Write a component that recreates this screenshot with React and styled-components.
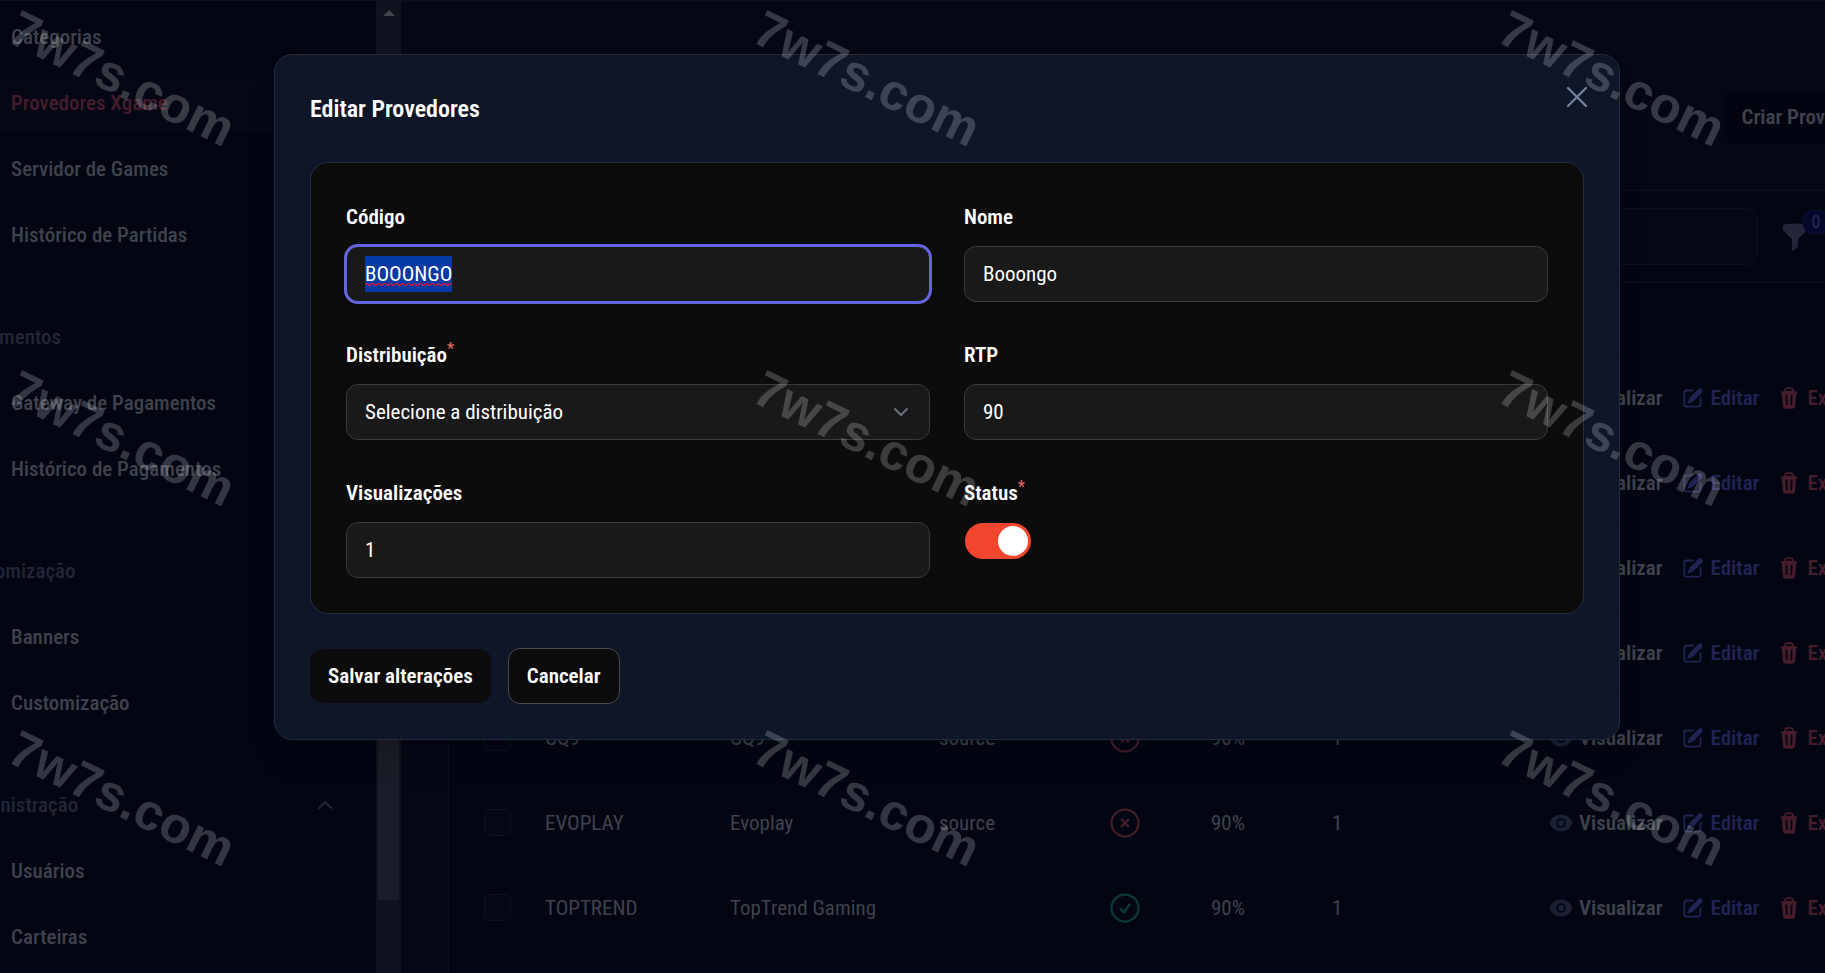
import { useEffect, useRef } from "react"
import styled, { createGlobalStyle } from "styled-components"
import { HiOutlineXMark, HiOutlineXCircle, HiOutlineCheckCircle } from "react-icons/hi2"
import { HiMiniEye, HiMiniPencilSquare, HiMiniTrash, HiMiniFunnel } from "react-icons/hi2"
import { ChevronUp, ChevronDown } from "lucide-react"

const theme = {
    page: "#040814",
    sidebar: "#020612",
    line: "#0c101b",
    muted: "#3f424c",
    faded: "#222636",
    indigo: "#212452",
    red: "#451d2b",
    green: "#0b3b3a",
    modal: "#0e1628",
    section: "#0c0c0c",
    field: "#191919",
    ring: "#3a3a3b",
    selection: "#0539a3",
}

const GlobalStyle = createGlobalStyle`
    * {
        box-sizing: border-box;
    }

    body {
        margin: 0;
        background-color: ${theme.page};
    }

    body, button, input, select {
        font-family: "Roboto Condensed", "Liberation Sans Narrow", Roboto, sans-serif;
        font-size: 21px;
        line-height: 36px;
    }
`

const Page = styled.div`
    position: relative;
    display: flex;
    height: 100vh;
    overflow: hidden;
    border-top: 1px solid ${theme.line};
`

const Sidebar = styled.aside`
    display: flex;
    flex: none;
    width: 401px;
    overflow: hidden;
    background-color: ${theme.sidebar};
`

const Nav = styled.nav`
    flex: 1;
    display: flex;
    flex-direction: column;
    gap: 42px;
    margin-left: -61px;
    padding-top: 6px;
`

const NavGroup = styled.div`
    display: flex;
    flex-direction: column;
    gap: 6px;
`

const GroupHeader = styled.div`
    display: flex;
    align-items: center;
    justify-content: space-between;
    height: 60px;
    padding: 0 39px 0 18px;
    font-weight: 500;
    color: ${theme.faded};
`

const NavItem = styled.a`
    display: flex;
    align-items: center;
    height: 60px;
    margin-right: 36px;
    padding-left: 72px;
    border-radius: 12px;
    font-weight: 500;
    text-decoration: none;
    color: ${props => props.$active ? theme.red : theme.muted};
    background-color: ${props => props.$active ? "#050814" : "transparent"};
`

const Scrollbar = styled.div`
    flex: none;
    display: flex;
    flex-direction: column;
    align-items: center;
    width: 25px;
    padding-top: 9px;
    background-color: #10131d;
`

const ScrollArrow = styled.div`
    border: 6px solid transparent;
    border-top: 0;
    border-bottom-color: #44464e;
`

const ScrollThumb = styled.div`
    width: 21px;
    height: 660px;
    margin-top: 224px;
    background-color: #1a1d27;
`

const Main = styled.main`
    flex: 1;
    margin-right: -123px;
    padding: 89px 48px 0 47px;
`

const PageHeader = styled.header`
    display: flex;
    justify-content: flex-end;
    margin-bottom: 46px;
`

const CreateButton = styled.button`
    height: 54px;
    padding: 0 18px;
    border: 0;
    border-radius: 12px;
    font-weight: 600;
    color: ${theme.muted};
    background-color: #02040f;
`

const Card = styled.section`
    border: 1px solid ${theme.line};
    border-radius: 18px;
    background-color: ${theme.sidebar};
`

const Toolbar = styled.div`
    display: flex;
    justify-content: flex-end;
    align-items: center;
    gap: 22px;
    height: 92px;
    padding-right: 89px;
    border-bottom: 1px solid ${theme.line};
`

const Search = styled.input`
    width: 360px;
    height: 57px;
    border: 1px solid ${theme.line};
    border-radius: 12px;
    background-color: #040814;
`

const FilterButton = styled.button`
    position: relative;
    display: flex;
    padding: 0;
    border: 0;
    color: ${theme.faded};
    background: none;
`

const FilterBadge = styled.span`
    position: absolute;
    left: 23px;
    top: -12px;
    width: 26px;
    border: 1px solid #0d1033;
    border-radius: 9px;
    font-size: 18px;
    line-height: 22px;
    text-align: center;
    color: #25285f;
    background-color: #05082a;
`

const Table = styled.table`
    width: 100%;
    table-layout: fixed;
    border-collapse: collapse;
    color: ${theme.muted};

    th {
        height: 72px;
        padding: 0;
        font-weight: 500;
        text-align: left;
    }

    td {
        height: 85px;
        padding: 0;
        border-top: 1px solid #060a15;
    }
`

const Tick = styled.input`
    display: block;
    appearance: none;
    width: 27px;
    height: 27px;
    margin: 0 0 0 35px;
    border: 1px solid #0e121d;
    border-radius: 6px;
    background-color: #040814;
`

const StatusIcon = styled.span`
    display: flex;
    color: ${props => props.$on ? theme.green : theme.red};
`

const Actions = styled.div`
    display: flex;
    gap: 18px;
`

const Action = styled.a`
    display: flex;
    align-items: center;
    gap: 6px;
    font-weight: 600;
    text-decoration: none;
    color: ${props => props.$color};

    svg {
        flex: none;
        color: ${props => props.$icon || props.$color};
    }
`

const Overlay = styled.div`
    position: absolute;
    inset: 0;
    display: flex;
    justify-content: center;
    align-items: flex-start;
    padding: 53px 0 0 69px;
`

const Modal = styled.form`
    position: relative;
    flex: 0 1 1346px;
    display: flex;
    flex-direction: column;
    gap: 35px;
    padding: 36px 35px;
    border: 1px solid #232a3a;
    border-radius: 18px;
    background-color: ${theme.modal};
    box-shadow: 0 24px 36px -12px rgba(3, 0, 12, 0.2);
`

const Title = styled.h2`
    margin: 0;
    font-size: 24px;
    font-weight: 600;
    line-height: 36px;
    color: #ffffff;
`

const CloseButton = styled.button`
    position: absolute;
    top: 24px;
    right: 24px;
    display: flex;
    padding: 0;
    border: 0;
    color: #75829b;
    background: none;
`

const Section = styled.div`
    display: grid;
    grid-template-columns: 1fr 1fr;
    gap: 34px;
    padding: 35px;
    border: 1px solid #272d38;
    border-radius: 18px;
    background-color: ${theme.section};
`

const Field = styled.div`
    position: relative;
    display: flex;
    flex-direction: column;
    gap: 12px;
`

const Label = styled.label`
    display: flex;
    height: 36px;
    font-weight: 600;
    line-height: 38px;
    color: #ffffff;
`

const Required = styled.sup`
    font-size: 16px;
    font-weight: 500;
    line-height: 26px;
    color: #e5645f;
`

const Input = styled.input`
    width: 100%;
    height: 56px;
    padding: 9px 18px;
    border: 1px solid ${theme.ring};
    border-radius: 12px;
    outline: 0;
    color: #ffffff;
    background-color: ${theme.field};

    &:focus {
        border-color: #6566e0;
        box-shadow: 0 0 0 2px #6566e0;
    }

    &::selection {
        color: #ffffff;
        background-color: ${theme.selection};
    }
`

const CodeInput = styled(Input)`
    &:focus {
        background-image: linear-gradient(${theme.selection}, ${theme.selection});
        background-position: 18px center;
        background-size: 87px 36px;
        background-repeat: no-repeat;
    }
`

const SpellingMark = styled.span`
    position: absolute;
    left: 19px;
    bottom: 16px;
    width: 87px;
    height: 3px;
    background-image:
        linear-gradient(45deg, transparent 35%, #c4183f 35% 65%, transparent 65%),
        linear-gradient(135deg, transparent 35%, #c4183f 35% 65%, transparent 65%);
    background-position: 0 0, 3px 0;
    background-size: 6px 3px;
    pointer-events: none;
`

const Select = styled(Input)`
    appearance: none;
`

const SelectIcon = styled(ChevronDown)`
    position: absolute;
    right: 17px;
    bottom: 16px;
    color: #6b7280;
    pointer-events: none;
`

const Toggle = styled.input`
    appearance: none;
    display: flex;
    justify-content: flex-end;
    width: 66px;
    height: 36px;
    margin: 1px;
    padding: 3px;
    border-radius: 18px;
    background-color: #f2452e;

    &::before {
        content: "";
        width: 30px;
        border-radius: 50%;
        background-color: #ffffff;
    }
`

const Footer = styled.footer`
    display: flex;
    align-items: center;
    gap: 17px;
    height: 54px;
`

const Button = styled.button`
    flex: none;
    height: ${props => props.$outlined ? "56px" : "54px"};
    padding: 0 18px;
    border: ${props => props.$outlined ? "1px solid #474a52" : "0"};
    border-radius: 12px;
    font-weight: 600;
    color: #ffffff;
    background-color: ${theme.section};
`

const Watermarks = styled.div`
    position: absolute;
    inset: 0;
    display: grid;
    grid-template-columns: repeat(3, 745px);
    grid-auto-rows: 360px;
    overflow: hidden;
    pointer-events: none;
`

const Watermark = styled.span`
    justify-self: start;
    align-self: start;
    margin-top: 50px;
    font-family: "Liberation Sans", sans-serif;
    font-size: 51px;
    font-weight: 700;
    line-height: 56px;
    color: rgba(255, 255, 255, 0.2);
    transform: rotate(26deg);
`

const groups = [
    { items: ["Categorias", "Provedores Xgame", "Servidor de Games", "Histórico de Partidas"] },
    { title: "Pagamentos", items: ["Gateway de Pagamentos", "Histórico de Pagamentos"] },
    { title: "Customização", items: ["Banners", "Customização"] },
    { title: "Administração", items: ["Usuários", "Carteiras"] },
]

const providers = [
    { code: "BOOONGO", name: "Booongo", distribution: "", active: true },
    { code: "HABANERO", name: "Habanero", distribution: "source", active: false },
    { code: "DREAMTECH", name: "Dreamtech", distribution: "source", active: false },
    { code: "PLAYSON", name: "Playson", distribution: "source", active: false },
    { code: "CQ9", name: "CQ9", distribution: "source", active: false },
    { code: "EVOPLAY", name: "Evoplay", distribution: "source", active: false },
    { code: "TOPTREND", name: "TopTrend Gaming", distribution: "", active: true },
    { code: "PGSOFT", name: "PG Soft", distribution: "", active: true },
]

const columns = [
    { label: "", width: 96 },
    { label: "Código", width: 185 },
    { label: "Nome", width: 209 },
    { label: "Distribuição", width: 168 },
    { label: "Status", width: 104 },
    { label: "RTP", width: 121 },
    { label: "Visualizações", width: 217 },
    { label: "" },
]

const ProviderRow = ({ data }) => {
    return (
        <tr>
            <td><Tick type="checkbox" aria-label={data.code} /></td>
            <td>{data.code}</td>
            <td>{data.name}</td>
            <td>{data.distribution}</td>
            <td>
                <StatusIcon $on={data.active}>
                    {data.active ? <HiOutlineCheckCircle size={36} /> : <HiOutlineXCircle size={36} />}
                </StatusIcon>
            </td>
            <td>90%</td>
            <td>1</td>
            <td>
                <Actions>
                    <Action href="#" $color={theme.muted} $icon="#1b2133"><HiMiniEye size={24} />Visualizar</Action>
                    <Action href="#" $color={theme.indigo}><HiMiniPencilSquare size={24} />Editar</Action>
                    <Action href="#" $color={theme.red}><HiMiniTrash size={24} />Excluir</Action>
                </Actions>
            </td>
        </tr>
    )
}

const EditModal = () => {
    const codeRef = useRef(null)

    useEffect(() => {
        codeRef.current.focus()
        codeRef.current.select()
    }, [])

    return (
        <Overlay>
            <Modal role="dialog" aria-labelledby="modal-title">
                <Title id="modal-title">Editar Provedores</Title>
                <CloseButton type="button" aria-label="Fechar"><HiOutlineXMark size={36} /></CloseButton>
                <Section>
                    <Field>
                        <Label htmlFor="code">Código</Label>
                        <CodeInput id="code" ref={codeRef} defaultValue="BOOONGO" />
                        <SpellingMark />
                    </Field>
                    <Field>
                        <Label htmlFor="name">Nome</Label>
                        <Input id="name" defaultValue="Booongo" />
                    </Field>
                    <Field>
                        <Label htmlFor="distribution">Distribuição<Required>*</Required></Label>
                        <Select as="select" id="distribution">
                            <option>Selecione a distribuição</option>
                        </Select>
                        <SelectIcon size={24} strokeWidth={2} />
                    </Field>
                    <Field>
                        <Label htmlFor="rtp">RTP</Label>
                        <Input id="rtp" defaultValue="90" />
                    </Field>
                    <Field>
                        <Label htmlFor="views">Visualizações</Label>
                        <Input id="views" defaultValue="1" />
                    </Field>
                    <Field>
                        <Label htmlFor="status">Status<Required>*</Required></Label>
                        <Toggle id="status" type="checkbox" role="switch" defaultChecked />
                    </Field>
                </Section>
                <Footer>
                    <Button type="submit">Salvar alterações</Button>
                    <Button type="button" $outlined>Cancelar</Button>
                </Footer>
            </Modal>
        </Overlay>
    )
}

const App = () => {
    return (
        <Page>
            <GlobalStyle />
            <Sidebar>
                <Nav>
                    {groups.map(group => (
                        <NavGroup key={group.items[0]}>
                            {group.title && (
                                <GroupHeader>{group.title}<ChevronUp size={24} strokeWidth={2} /></GroupHeader>
                            )}
                            {group.items.map(item => (
                                <NavItem key={item} href="#" $active={item === "Provedores Xgame"}>{item}</NavItem>
                            ))}
                        </NavGroup>
                    ))}
                </Nav>
                <Scrollbar>
                    <ScrollArrow />
                    <ScrollThumb />
                </Scrollbar>
            </Sidebar>
            <Main>
                <PageHeader>
                    <CreateButton type="button">Criar Provedores</CreateButton>
                </PageHeader>
                <Card>
                    <Toolbar>
                        <Search type="search" aria-label="Pesquisar" />
                        <FilterButton type="button" aria-label="Filtros">
                            <HiMiniFunnel size={30} />
                            <FilterBadge>0</FilterBadge>
                        </FilterButton>
                    </Toolbar>
                    <Table>
                        <colgroup>
                            {columns.map((column, index) => <col key={index} width={column.width} />)}
                        </colgroup>
                        <thead>
                            <tr>{columns.map((column, index) => <th key={index}>{column.label}</th>)}</tr>
                        </thead>
                        <tbody>
                            {providers.map(provider => <ProviderRow key={provider.code} data={provider} />)}
                        </tbody>
                    </Table>
                </Card>
            </Main>
            <EditModal />
            <Watermarks aria-hidden="true">
                {Array.from({ length: 9 }, (_, index) => <Watermark key={index}>7w7s.com</Watermark>)}
            </Watermarks>
        </Page>
    )
}

export default App
